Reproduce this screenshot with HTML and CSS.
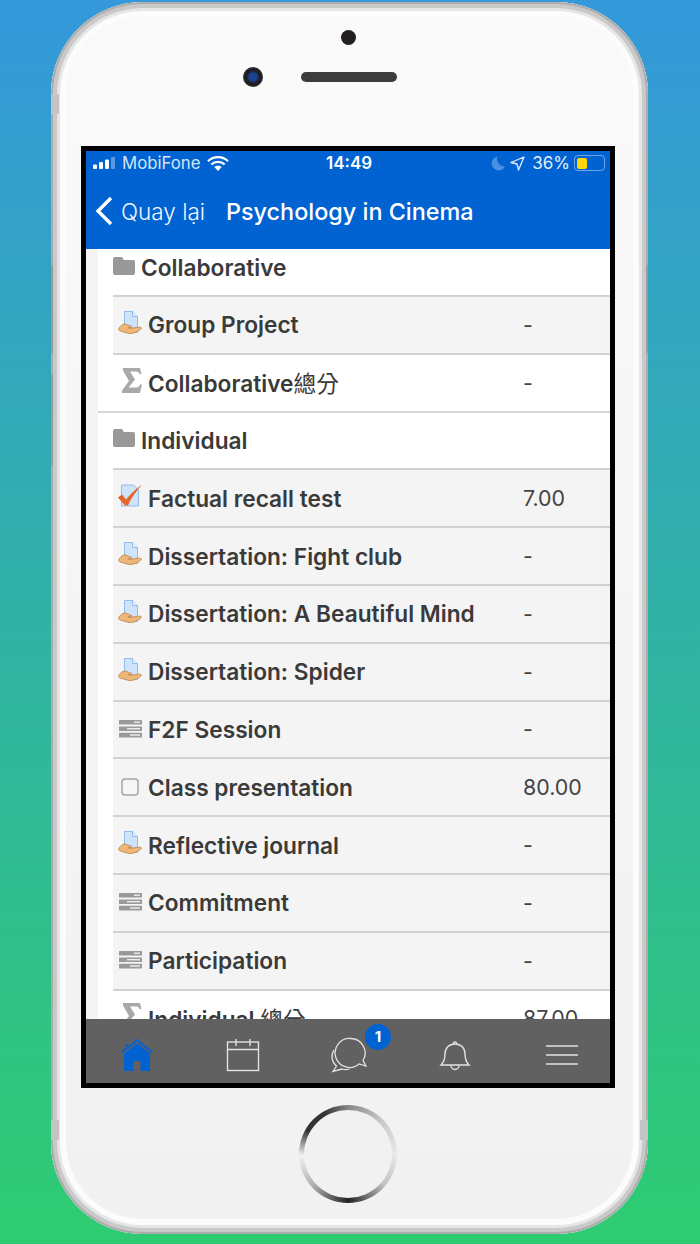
FILE: index.html
```html
<!DOCTYPE html>
<html lang="vi">
<head>
<meta charset="utf-8">
<title>Psychology in Cinema</title>
<link rel="stylesheet" href="styles.css">
</head>
<body>
<svg class="defs" width="0" height="0" aria-hidden="true">
  <symbol id="i-folder" viewBox="0 0 22 18"><path d="M2 0h6c1 0 1.600.5 2 1.500L10.600 3H20a2 2 0 0 1 2 2v11a2 2 0 0 1-2 2H2a2 2 0 0 1-2-2V2a2 2 0 0 1 2-2z" fill="#999"/></symbol>
  <symbol id="i-assign" viewBox="0 0 24 25">
    <path d="M6.500.5h8l5 5v16h-13z" fill="#cfe3fa" stroke="#8fbcec"/>
    <path d="M14.500.5v5h5" fill="#eaf3fd" stroke="#8fbcec"/>
    <path d="M.4 18.500c1.500-3.500 4-5.500 6.500-5.500 1.500 0 3 1.200 5 1.800 1.500.3 2.500.9 2 1.500-.4.500-2 .6-4 .5 3 .5 6 .4 9.500-.5 1.800-.4 4.500 0 4 1-1 1.800-5.500 4.500-10 5.200-2.500.3-5-.5-7.500-1.500C3.500 20.500 1 20 .4 18.500z" fill="#eeb778" stroke="#b98448" stroke-width=".8"/>
  </symbol>
  <symbol id="i-sigma" viewBox="0 0 20 25"><path d="M1 0H18L19.500 6H17.500C17 4 15.500 3.500 13 3.500H8L13 11.500 6.500 19.500H14C16 19.500 17.500 18.500 18 16.500H20L18 25H0V22.500L7 13 1 2.500Z" fill="#a9a9a9"/></symbol>
  <symbol id="i-quiz" viewBox="0 0 24 24">
    <path d="M3.500.5h12l5 5v16h-17z" fill="#cfe3fa" stroke="#8fbcec"/>
    <path d="M0 13l4-3 4 5C12 10 17 5 24 0c-5 6-10 12-14 21H7z" fill="#e3662a"/>
  </symbol>
  <symbol id="i-manual" viewBox="0 0 24 18">
    <rect x="0" y="0" width="23" height="4.600" rx=".6" fill="#999"/><rect x="0" y="6.400" width="23" height="4.600" rx=".6" fill="#999"/><rect x="0" y="12.800" width="23" height="4.600" rx=".6" fill="#999"/>
    <rect x="15" y="1.500" width="6" height="1.400" fill="#eee"/><rect x="8" y="8" width="13" height="1.400" fill="#eee"/><rect x="11" y="14.300" width="10" height="1.400" fill="#eee"/>
  </symbol>
  <symbol id="i-check" viewBox="0 0 18 18"><rect x="1" y="1" width="16" height="16" rx="3" fill="#f6f6f6" stroke="#a5a5a5" stroke-width="1.500"/></symbol>
</svg>

<div class="phone">
  <div class="rim"></div>
  <span class="side side-a"></span>
  <span class="side side-b"></span>
  <span class="side side-c"></span>
  <span class="side side-d"></span>
  <span class="side side-e"></span>
  <span class="side side-f"></span>
  <span class="sensor"></span>
  <span class="camera"></span>
  <span class="speaker"></span>
  <span class="home-button"><span class="home-inner"></span></span>

  <div class="screen">
    <header class="top">
      <div class="status">
        <div class="status-left">
          <svg class="signal" width="24" height="12" viewBox="0 0 24 12"><rect x="0" y="7.500" width="4" height="4.500" rx="1" fill="#fff"/><rect x="6" y="5" width="4" height="7" rx="1" fill="#fff"/><rect x="12" y="2.500" width="4" height="9.500" rx="1" fill="#fff"/><rect x="18" y="0" width="4" height="12" rx="1" fill="#fff" opacity=".35"/></svg>
          <span class="carrier">MobiFone</span>
          <svg class="wifi" width="22" height="15" viewBox="0 0 22 15"><path d="M1 5.200a14.500 14.500 0 0 1 20 0M4.300 8.500a9.800 9.800 0 0 1 13.400 0" fill="none" stroke="#fff" stroke-width="2.200"/><path d="M7.300 11a5.300 5.300 0 0 1 7.400 0L11 15z" fill="#fff"/></svg>
        </div>
        <span class="clock">14:49</span>
        <div class="status-right">
          <svg class="moon" width="15" height="15" viewBox="0 0 15 15"><path d="M6.500.5A7 7 0 1 0 14 10.500 7.500 7.500 0 0 1 6.500.5z" fill="#4d8fe0"/></svg>
          <svg class="arrow" width="15" height="15" viewBox="0 0 15 15"><path d="M14 1L1 6.500l6 1.500 1.500 6z" fill="none" stroke="#e4eefb" stroke-width="1.300" stroke-linejoin="round"/></svg>
          <span class="pct">36%</span>
          <span class="battery"><span class="battery-fill"></span></span>
        </div>
      </div>
      <div class="nav">
        <a class="back">
          <svg width="19" height="30" viewBox="0 0 19 30"><path d="M16 2L3 15l13 13" fill="none" stroke="#fff" stroke-width="3.400"/></svg>
          <span>Quay lại</span>
        </a>
        <h1 class="title">Psychology in Cinema</h1>
      </div>
    </header>

    <main class="content">
      <div class="row cat first"><svg class="ico-folder"><use href="#i-folder"/></svg><b>Collaborative</b></div>
      <div class="row item"><svg class="ico"><use href="#i-assign"/></svg><b>Group Project</b><span class="val">-</span></div>
      <div class="row total group-end"><svg class="ico ico-sigma"><use href="#i-sigma"/></svg><b>Collaborative<span class="cjk">總分</span></b><span class="val">-</span></div>
      <div class="row cat"><svg class="ico-folder"><use href="#i-folder"/></svg><b>Individual</b></div>
      <div class="row item"><svg class="ico"><use href="#i-quiz"/></svg><b>Factual recall test</b><span class="val">7.00</span></div>
      <div class="row item"><svg class="ico"><use href="#i-assign"/></svg><b>Dissertation: Fight club</b><span class="val">-</span></div>
      <div class="row item"><svg class="ico"><use href="#i-assign"/></svg><b>Dissertation: A Beautiful Mind</b><span class="val">-</span></div>
      <div class="row item"><svg class="ico"><use href="#i-assign"/></svg><b>Dissertation: Spider</b><span class="val">-</span></div>
      <div class="row item"><svg class="ico ico-manual"><use href="#i-manual"/></svg><b>F2F Session</b><span class="val">-</span></div>
      <div class="row item"><svg class="ico ico-check"><use href="#i-check"/></svg><b>Class presentation</b><span class="val">80.00</span></div>
      <div class="row item"><svg class="ico"><use href="#i-assign"/></svg><b>Reflective journal</b><span class="val">-</span></div>
      <div class="row item"><svg class="ico ico-manual"><use href="#i-manual"/></svg><b>Commitment</b><span class="val">-</span></div>
      <div class="row item"><svg class="ico ico-manual"><use href="#i-manual"/></svg><b>Participation</b><span class="val">-</span></div>
      <div class="row total"><svg class="ico ico-sigma"><use href="#i-sigma"/></svg><b>Individual <span class="cjk">總分</span></b><span class="val">87.00</span></div>
    </main>

    <nav class="tabs">
      <svg class="tab tab-home" width="34" height="34" viewBox="0 0 34 34"><path d="M1.500 14.500L17 2l15.500 12.500" fill="none" stroke="#0063d1" stroke-width="1.800"/><path d="M5 9V6h3v1.500zM17 5L30 15.500V33h-9.500V23h-7v10H4V15.500z" fill="#0063d1"/></svg>
      <svg class="tab" width="34" height="34" viewBox="0 0 34 34" fill="none" stroke="#e2e2e2" stroke-width="1.400"><rect x="1.500" y="4" width="31" height="28.500"/><path d="M1.500 11.500h31M10 1v7M24 1v7"/></svg>
      <span class="tab chat">
        <svg width="38" height="36" viewBox="0 0 38 36" fill="none" stroke="#e2e2e2" stroke-width="1.300"><path d="M21.500 1.500a14.500 14.500 0 0 1 12.500 22l3 5.500-7-2a14.500 14.500 0 1 1-8.500-25.500z"/><path d="M5 13a12 12 0 0 0 2.500 16L4 34.500l9-2.500a12 12 0 0 0 7.500 0"/></svg>
        <span class="badge">1</span>
      </span>
      <svg class="tab tab-bell" width="34" height="34" viewBox="0 0 34 34" fill="none" stroke="#e2e2e2" stroke-width="1.400"><path d="M3 27c3-3 4-6 4-11 0-6 4-10 10-10s10 4 10 10c0 5 1 8 4 11z"/><path d="M15.500 6a1.600 1.600 0 1 1 3 0M13 27.500a4 4 0 0 0 8 0"/></svg>
      <svg class="tab tab-menu" width="34" height="34" viewBox="0 0 34 34" fill="none" stroke="#e2e2e2" stroke-width="1.600"><path d="M1 8h32M1 17h32M1 26h32"/></svg>
    </nav>
  </div>
</div>
</body>
</html>
```

FILE: styles.css
```css
* { box-sizing: border-box; }
html, body { margin: 0; height: 1244px; }
body {
  width: 700px;
  overflow: hidden;
  padding: 2px 0 0 51px;
  background: linear-gradient(180deg, #3498db 0%, #2ecc71 100%);
  font-family: Inter, "Noto Sans CJK TC", sans-serif;
}
.defs { position: absolute; }

.phone {
  position: relative;
  width: 597px;
  height: 1232px;
  padding: 144px 0 0 30px;
  border-radius: 92px;
  background: #f4f4f4;
  box-shadow: inset 0 0 0 2px #acacac, inset 0 0 0 6px #c9c9c9, inset 0 0 0 9px #e6e6e6, inset 0 0 0 15px #fcfcfc;
}
.rim {
  position: absolute;
  inset: 15px;
  border-radius: 78px;
  background: linear-gradient(180deg, #fafafa 0%, #f5f5f5 50%, #f1f1f1 100%);
}
.side { position: absolute; background: #c4c4c4; }
.side-a { left: 0; top: 92px; width: 8px; height: 20px; }
.side-b { left: 0; top: 263px; width: 2px; height: 88px; background: #9a9a9a; }
.side-c { left: 0; top: 373px; width: 2px; height: 90px; background: #9a9a9a; }
.side-d { right: 0; top: 263px; width: 2px; height: 88px; background: #9a9a9a; }
.side-e { right: 0; top: 1118px; width: 8px; height: 20px; }
.side-f { left: 0; top: 1118px; width: 8px; height: 20px; }
.sensor { position: absolute; left: 290px; top: 28px; width: 15px; height: 15px; border-radius: 50%; background: #231f20; }
.camera { position: absolute; left: 192px; top: 65px; width: 20px; height: 20px; border-radius: 50%; background: radial-gradient(circle, #1b4390 0 25%, #1a1a1a 50%, #333 75%, #999 100%); }
.speaker { position: absolute; left: 250px; top: 70px; width: 96px; height: 10px; border-radius: 5px; background: #3c3c3c; }
.home-button {
  position: absolute;
  left: 248px; top: 1103px;
  width: 98px; height: 98px;
  padding: 5px;
  border-radius: 50%;
  background: conic-gradient(#888 0deg, #c8c8c8 45deg, #e8e8e8 90deg, #c4c4c4 130deg, #222 180deg, #aaa 225deg, #f2f2f2 268deg, #333 300deg, #333 330deg, #888 360deg);
}
.home-inner { display: block; width: 100%; height: 100%; border-radius: 50%; background: #f1f1f1; }

.screen {
  position: relative;
  width: 534px;
  height: 942px;
  border: 5px solid #000;
  display: flex;
  flex-direction: column;
  background: #fff;
}

.top { height: 98px; flex: none; background: #0063d1; color: #fff; }
.status { height: 24px; padding: 0 5px 0 7px; display: flex; align-items: center; position: relative; font-size: 16.800px; }
.status-left { display: flex; align-items: center; gap: 5px; }
.carrier { color: #d4e4f8; }
.wifi { margin-left: 1px; }
.clock { position: absolute; left: 240px; font-weight: 600; font-size: 17px; }
.status-right { margin-left: auto; display: flex; align-items: center; gap: 6px; color: #e4eefb; }
.moon { margin-right: -2px; }
.pct { margin-right: -1px; font-size: 17px; transform: translateX(1px); }
.battery { width: 31px; height: 16px; border: 1.500px solid #6ea3e6; border-radius: 4px; padding: 1.500px; display: block; }
.battery-fill { display: block; width: 10px; height: 100%; border-radius: 2px; background: #ffd60a; }

.nav { height: 72px; display: flex; align-items: center; position: relative; }
.back { display: flex; align-items: center; gap: 7px; padding-left: 9px; font-size: 22.500px; font-weight: 300; color: #f0f6ff; }
.title { position: absolute; left: 140px; margin: 0; font-size: 23.400px; font-weight: 500; color: #fff; white-space: nowrap; }

.content {
  flex: 1;
  min-height: 0;
  overflow: hidden;
  background: linear-gradient(90deg, #f4f4f4 0 12px, #fff 12px);
}
.row {
  height: 57.800px;
  margin-left: 27px;
  display: flex;
  align-items: center;
  position: relative;
  border-bottom: 2px solid #d2d2d2;
  color: #3a3a3a;
  font-size: 22.700px;
}
.row b { font-weight: 600; }
.row .cjk { font-weight: 400; }
.first { height: 48px; padding-bottom: 9px; }
.row.total { border-bottom-color: #d8d8d8; }
.row.total, .row.cat { background: #fff; }
.item { background: #f4f4f4; }
.group-end { margin-left: 12px; padding-left: 15px; }
.ico-folder { width: 22px; height: 18px; margin-right: 6px; margin-top: -4px; flex: none; }
.ico { width: 24px; height: 25px; margin: -3px 6px 0 5px; flex: none; }
.ico-sigma { width: 20px; height: 25px; margin: -5px 6px 0 9px; }
.ico-manual { height: 18px; margin-top: -1px; margin-left: 6px; margin-right: 5px; width: 24px; }
.ico-check { width: 18px; height: 18px; margin: 0 9px 0 8px; }
.val { position: absolute; left: 410px; font-size: 21.400px; font-weight: 400; color: #444; }
.group-end .val { left: 425px; }

.tabs {
  height: 64px;
  flex: none;
  background: #616161;
  display: grid;
  grid-template-columns: repeat(5, 1fr);
  align-items: center;
  justify-items: center;
  padding-top: 8px;
}
.tab { display: block; }
.tab-home { transform: translateX(-1px); }
.tab-bell { transform: translateX(2px); }
.tab-menu { transform: translateX(4px); }
.chat { position: relative; width: 38px; height: 36px; }
.badge {
  position: absolute;
  left: 36px; top: -13px;
  width: 26px; height: 26px;
  border-radius: 50%;
  background: #0063d1;
  color: #fff;
  font-size: 15px;
  font-weight: 700;
  line-height: 26px;
  text-align: center;
}
```
